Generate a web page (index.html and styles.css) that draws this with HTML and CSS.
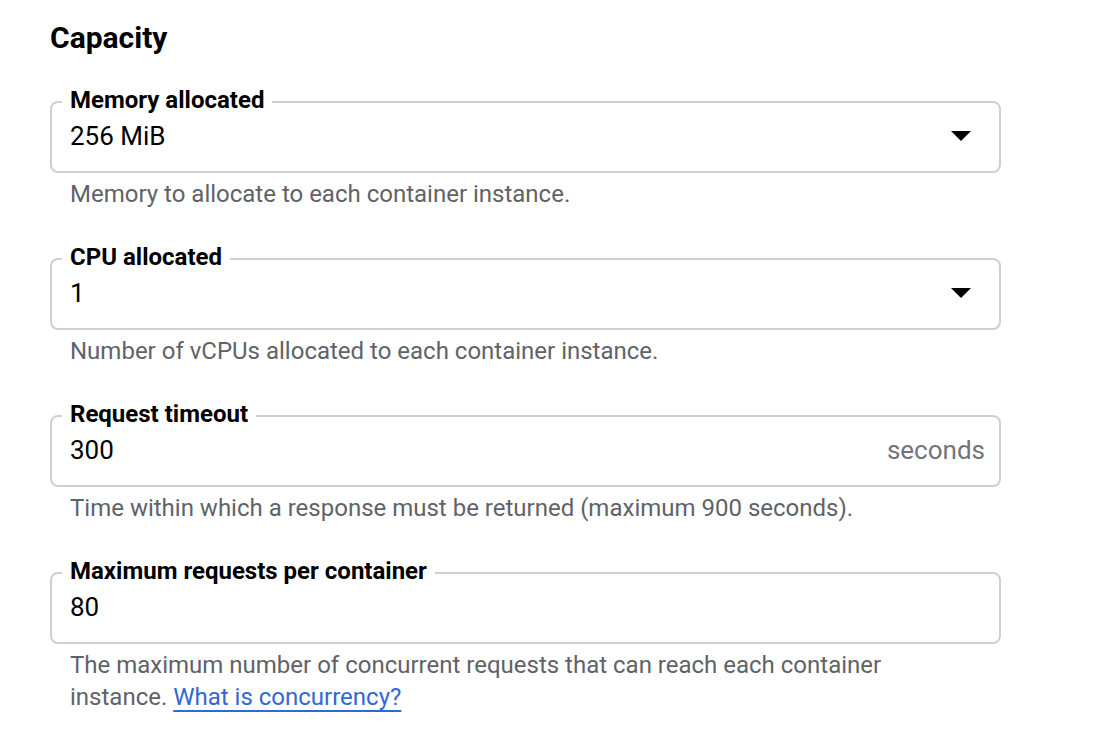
FILE: index.html
```html
<!DOCTYPE html>
<html>
<head>
<meta charset="utf-8">
<link rel="stylesheet" href="styles.css">
</head>
<body>
<main class="panel">
  <h2 class="title">Capacity</h2>

  <div class="field">
    <fieldset class="box">
      <legend class="label">Memory allocated</legend>
      <div class="row">
        <span class="value">256 MiB</span>
        <span class="arrow"></span>
      </div>
    </fieldset>
    <p class="hint">Memory to allocate to each container instance.</p>
  </div>

  <div class="field">
    <fieldset class="box">
      <legend class="label">CPU allocated</legend>
      <div class="row">
        <span class="value">1</span>
        <span class="arrow"></span>
      </div>
    </fieldset>
    <p class="hint">Number of vCPUs allocated to each container instance.</p>
  </div>

  <div class="field">
    <fieldset class="box">
      <legend class="label">Request timeout</legend>
      <div class="row">
        <span class="value">300</span>
        <span class="suffix">seconds</span>
      </div>
    </fieldset>
    <p class="hint">Time within which a response must be returned (maximum 900 seconds).</p>
  </div>

  <div class="field">
    <fieldset class="box">
      <legend class="label">Maximum requests per container</legend>
      <div class="row">
        <span class="value">80</span>
      </div>
    </fieldset>
    <p class="hint narrow">The maximum number of concurrent requests that can reach each container instance. <a class="link" href="#">What is concurrency?</a></p>
  </div>
</main>
</body>
</html>
```

FILE: styles.css
```css
html, body {
  margin: 0;
  padding: 0;
  background: #ffffff;
}

body {
  font-family: Roboto, "Liberation Sans", Arial, sans-serif;
  color: #202124;
}

.panel {
  width: 951px;
  padding: 18px 0 0 50px;
}

.title {
  margin: 0;
  font-size: 30px;
  font-weight: 700;
  line-height: 40px;
  color: #000;
}

.field {
  margin-top: 33px;
}

.title + .field {
  margin-top: 28px;
}

.box {
  margin: 0;
  padding: 0 14px 17px 18px;
  border: 2px solid #cfcfcf;
  border-radius: 8px;
}

.label {
  padding: 0 8px 4px;
  margin-left: -8px;
  font-size: 24px;
  font-weight: 700;
  line-height: 28px;
  color: #000;
}

.row {
  display: flex;
  align-items: center;
  justify-content: space-between;
  height: 36px;
}

.value {
  font-size: 26px;
  color: #000;
}

.arrow {
  width: 0;
  height: 0;
  border-left: 10px solid transparent;
  border-right: 10px solid transparent;
  border-top: 10px solid #000;
  margin-right: 14px;
}

.suffix {
  font-size: 26px;
  color: #70757a;
}

.hint {
  margin: 5px 0 0 20px;
  font-size: 24px;
  line-height: 32px;
  color: #5f6368;
}

.narrow {
  max-width: 860px;
}

.link {
  color: #3367d6;
  text-decoration: underline;
  text-decoration-thickness: 2px;
  text-underline-offset: 5px;
}
```
